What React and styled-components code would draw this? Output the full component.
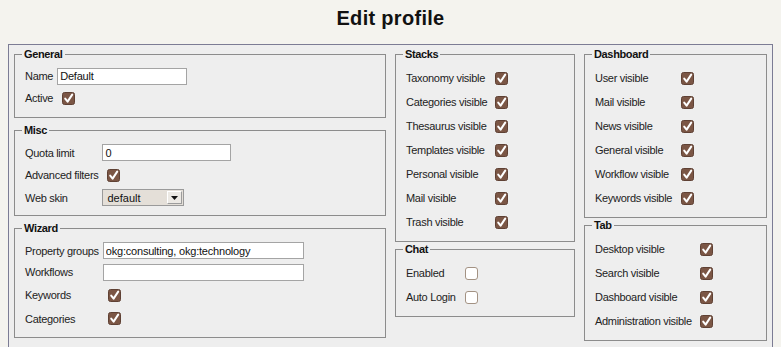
import React from 'react';
import styled, { createGlobalStyle } from 'styled-components';

const GlobalStyle = createGlobalStyle`
  html, body {
    margin: 0;
    padding: 0;
    background: #f4f3ee;
    font-family: "Liberation Sans", Arial, sans-serif;
    color: #1e1e1e;
  }
`;

const Page = styled.div`
  padding: 0 8px;
`;

const Title = styled.h1`
  margin: 0 0 14px;
  padding-top: 6px;
  font-size: 20px;
  line-height: 24px;
  letter-spacing: 0.3px;
  font-weight: bold;
  text-align: center;
  color: #111;
`;

const Panel = styled.div`
  border: 1px solid #7c7c94;
  background: #eeeeee;
  padding: 3px 5px 6px;
  display: grid;
  grid-template-columns: 372px 180px 183px;
  column-gap: 9px;
  align-items: start;
`;

const Column = styled.div`
  display: flex;
  flex-direction: column;
  gap: ${p => p.$gap}px;
`;

const Group = styled.fieldset`
  margin: 0;
  min-width: 0;
  border: 1px solid #8c8c8c;
  padding: 5px 10px 7px;
`;

const Legend = styled.legend`
  font-size: 11px;
  line-height: 13px;
  font-weight: bold;
  letter-spacing: -0.35px;
  padding: 0 2px;
  margin-left: -3px;
  color: #111;
`;

const Form = styled.div`
  display: grid;
  grid-template-columns: max-content 1fr;
  column-gap: ${p => p.$gap}px;
  align-items: center;
`;

const Label = styled.div`
  height: ${p => p.$h}px;
  display: flex;
  align-items: center;
  font-size: 11px;
  letter-spacing: -0.3px;
  white-space: nowrap;
  color: #222;
`;

const Cell = styled.div`
  height: ${p => p.$h}px;
  display: flex;
  align-items: center;
`;

const TextBox = styled.input`
  box-sizing: border-box;
  width: ${p => p.$w}px;
  height: 17px;
  margin: 0;
  border: 1px solid #a4a4a4;
  background: #fff;
  padding: 0 2px;
  font-family: "Liberation Sans", Arial, sans-serif;
  font-size: 11px;
  letter-spacing: -0.2px;
  color: #111;
  outline: none;
`;

const Select = styled.div`
  box-sizing: border-box;
  width: 82px;
  height: 17px;
  border: 1px solid #9a9a9a;
  background: #e4dfd8;
  display: flex;
  align-items: center;
  justify-content: space-between;
  padding: 0 1px 0 4px;
  font-size: 11px;
  color: #111;
`;

const SelectButton = styled.span`
  box-sizing: border-box;
  width: 15px;
  height: 13px;
  border: 1px solid #9c9c9c;
  border-top-color: #fff;
  border-left-color: #fff;
  background: #ece9e4;
  display: flex;
  align-items: center;
  justify-content: center;
`;

const Box = styled.span`
  display: inline-flex;
  margin-left: ${p => p.$offset}px;
  width: 13px;
  height: 13px;
`;

function Check({ checked, offset = 5 }) {
  return (
    <Box $offset={offset}>
      <svg width="13" height="13" viewBox="0 0 13 13">
        {checked ? (
          <>
            <rect x="0.5" y="0.5" width="12" height="12" rx="2" fill="#7b5645" stroke="#5f4134" />
            <path d="M3.2 6.6 L5.6 9.6 L10.2 2.6" fill="none" stroke="#fff" strokeWidth="2" strokeLinecap="round" strokeLinejoin="round" />
          </>
        ) : (
          <rect x="0.5" y="0.5" width="12" height="12" rx="2.5" fill="#fff" stroke="#a39283" />
        )}
      </svg>
    </Box>
  );
}

function Row({ label, children, h }) {
  return (
    <>
      <Label $h={h}>{label}</Label>
      <Cell $h={h}>{children}</Cell>
    </>
  );
}

function CheckGroup({ title, items, gap }) {
  return (
    <Group>
      <Legend>{title}</Legend>
      <Form $gap={gap}>
        {items.map(([label, on]) => (
          <Row key={label} label={label} h={24}>
            <Check checked={on} offset={0} />
          </Row>
        ))}
      </Form>
    </Group>
  );
}

const stacks = [
  ['Taxonomy visible', true],
  ['Categories visible', true],
  ['Thesaurus visible', true],
  ['Templates visible', true],
  ['Personal visible', true],
  ['Mail visible', true],
  ['Trash visible', true],
];

const chat = [
  ['Enabled', false],
  ['Auto Login', false],
];

const dashboard = [
  ['User visible', true],
  ['Mail visible', true],
  ['News visible', true],
  ['General visible', true],
  ['Workflow visible', true],
  ['Keywords visible', true],
];

const tabs = [
  ['Desktop visible', true],
  ['Search visible', true],
  ['Dashboard visible', true],
  ['Administration visible', true],
];

export default function App() {
  return (
    <Page>
      <GlobalStyle />
      <Title>Edit profile</Title>
      <Panel>
        <Column $gap={6}>
          <Group>
            <Legend>General</Legend>
            <Form $gap={4}>
              <Row label="Name" h={20}>
                <TextBox $w={130} defaultValue="Default" />
              </Row>
              <Row label="Active" h={24}>
                <Check checked />
              </Row>
            </Form>
          </Group>
          <Group>
            <Legend>Misc</Legend>
            <Form $gap={4}>
              <Row label="Quota limit" h={21}>
                <TextBox $w={129} defaultValue="0" />
              </Row>
              <Row label="Advanced filters" h={24}>
                <Check checked />
              </Row>
              <Row label="Web skin" h={21}>
                <Select>
                  <span>default</span>
                  <SelectButton>
                    <svg width="7" height="4" viewBox="0 0 7 4">
                      <path d="M0 0 H7 L3.5 4 Z" fill="#111" />
                    </svg>
                  </SelectButton>
                </Select>
              </Row>
            </Form>
          </Group>
          <Group>
            <Legend>Wizard</Legend>
            <Form $gap={4}>
              <Row label="Property groups" h={21}>
                <TextBox $w={201} defaultValue="okg:consulting, okg:technology" />
              </Row>
              <Row label="Workflows" h={22}>
                <TextBox $w={201} defaultValue="" />
              </Row>
              <Row label="Keywords" h={24}>
                <Check checked />
              </Row>
              <Row label="Categories" h={23}>
                <Check checked />
              </Row>
            </Form>
          </Group>
        </Column>
        <Column $gap={1}>
          <CheckGroup title="Stacks" items={stacks} gap={8} />
          <CheckGroup title="Chat" items={chat} gap={9} />
        </Column>
        <Column $gap={1}>
          <CheckGroup title="Dashboard" items={dashboard} gap={9} />
          <CheckGroup title="Tab" items={tabs} gap={8} />
        </Column>
      </Panel>
    </Page>
  );
}
